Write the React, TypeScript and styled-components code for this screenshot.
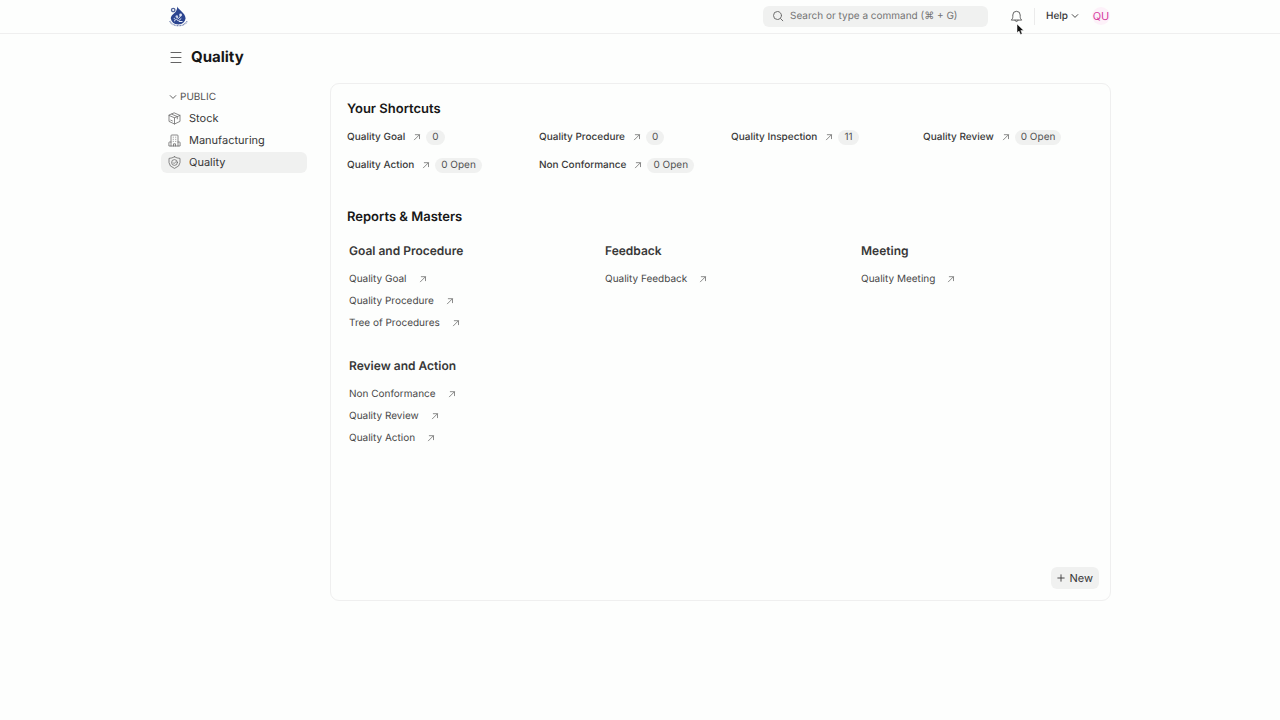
import React from "react";
import styled, { createGlobalStyle } from "styled-components";

const GlobalStyle = createGlobalStyle`
  *, *::before, *::after { box-sizing: border-box; }
  body {
    margin: 0;
    background: #fdfefd;
    color: #383838;
    font-family: Inter, "Liberation Sans", sans-serif;
    font-size: 10px;
    line-height: 16px;
    text-rendering: geometricPrecision;
  }
  h1, h2, h3, ul { margin: 0; padding: 0; }
  ul { list-style: none; }
  a { color: inherit; text-decoration: none; }
  button, input { font: inherit; color: inherit; text-rendering: inherit; }
  svg { display: block; flex: none; }
`;

const Page = styled.div`
  min-height: 100vh;
  overflow: hidden;
`;

const Container = styled.div`
  max-width: 966px;
  margin: 0 auto;
  padding: 0 12px 0 4px;
`;

const Navbar = styled.header`
  border-bottom: 1px solid #efefef;
`;

const NavRow = styled(Container)`
  display: flex;
  align-items: center;
  justify-content: space-between;
  height: 33px;
  padding-bottom: 1px;
`;

const Brand = styled.a`
  display: block;
  padding-left: 8px;
`;

const NavTools = styled.div`
  display: flex;
  align-items: center;
`;

const SearchBox = styled.label`
  display: flex;
  align-items: center;
  gap: 6px;
  width: 225px;
  height: 21px;
  padding: 0 9px;
  border-radius: 6px;
  background: #f0f1f0;
  color: #6e6e6e;
`;

const SearchInput = styled.input`
  flex: 1;
  min-width: 0;
  padding: 0;
  border: 0;
  outline: 0;
  background: transparent;
  &::placeholder { color: #747474; opacity: 1; }
`;

const IconButton = styled.button`
  position: relative;
  display: flex;
  padding: 0;
  border: 0;
  background: none;
  color: #525252;
`;

const BellButton = styled(IconButton)`
  margin-left: 22px;
`;

const Pointer = styled.svg`
  position: absolute;
  left: 6px;
  top: 13px;
`;

const Divider = styled.span`
  width: 1px;
  height: 17px;
  margin: 0 11px;
  background: #ebebeb;
`;

const HelpButton = styled(IconButton)`
  align-items: center;
  gap: 3px;
  color: #383838;
  font-weight: 500;
`;

const Avatar = styled.button`
  width: 18px;
  height: 18px;
  margin: 0 1px 0 13px;
  padding: 0;
  border: 0;
  border-radius: 50%;
  background: #fdf1f9;
  color: #d6409f;
  font-size: 11px;
  line-height: 18px;
`;

const PageHead = styled(Container)`
  display: flex;
  align-items: center;
  height: 49px;
  padding-bottom: 3px;
`;

const MenuButton = styled(IconButton)`
  margin: 0 8px;
`;

const PageTitle = styled.h1`
  color: #171717;
  font-size: 15px;
  font-weight: 700;
  line-height: 20px;
`;

const Body = styled(Container)`
  display: flex;
  align-items: flex-start;
  gap: 23px;
`;

const Sidebar = styled.nav`
  flex: none;
  width: 146px;
  padding-top: 6px;
`;

const SectionToggle = styled(IconButton)`
  align-items: center;
  gap: 3px;
  margin-bottom: 3px;
  padding-left: 8px;
`;

const SideLink = styled.a<{ $active?: boolean }>`
  display: flex;
  align-items: center;
  gap: 8px;
  height: 21px;
  margin-bottom: 1px;
  padding: 0 7px 1px;
  border-radius: 6px;
  background: ${(p) => (p.$active ? "#f0f1f0" : "transparent")};
  font-size: 11px;
  svg { color: #6b6b6b; }
`;

const Panel = styled.main`
  display: flex;
  flex: 1;
  flex-direction: column;
  min-width: 0;
  min-height: 518px;
  padding: 16px 16px 11px;
  border: 1px solid #efefef;
  border-radius: 9px;
`;

const SectionTitle = styled.h2`
  color: #171717;
  font-size: 13px;
  font-weight: 600;
  line-height: 18px;
`;

const ShortcutGrid = styled.ul`
  display: grid;
  grid-template-columns: repeat(4, 1fr);
  gap: 12px 21px;
  margin: 11px 0 35px;
`;

const Shortcut = styled.a`
  display: flex;
  align-items: center;
  gap: 4px;
  height: 16px;
  font-weight: 500;
  white-space: nowrap;
`;

const ShortcutName = styled.span`
  padding-right: 3px;
`;

const Count = styled.span`
  height: 15px;
  padding: 0 6px;
  border-radius: 8px;
  background: #f0f1f0;
  color: #525252;
  font-weight: 400;
  line-height: 15px;
`;

const CardGrid = styled.div`
  display: grid;
  grid-template-columns: repeat(3, 1fr);
  gap: 23px 21px;
  margin-top: 16px;
`;

const Card = styled.section`
  padding-left: 2px;
`;

const CardTitle = styled.h3`
  margin-bottom: 8px;
  font-size: 12px;
  font-weight: 600;
  line-height: 18px;
`;

const CardLink = styled.a`
  display: flex;
  align-items: center;
  gap: 11px;
  height: 22px;
  color: #484848;
`;

const NewButton = styled.button`
  display: flex;
  align-items: center;
  align-self: flex-end;
  gap: 4px;
  height: 22px;
  margin: auto -5px 0 0;
  padding: 0 6px;
  border: 0;
  border-radius: 6px;
  background: #f0f1f0;
  font-size: 11px;
`;

const line = {
  fill: "none",
  stroke: "currentColor",
  strokeLinecap: "round" as const,
  strokeLinejoin: "round" as const,
  "aria-hidden": true,
};

const Arrow = () => (
  <svg width="10" height="10" viewBox="0 0 10 10" {...line} stroke="#6e6e6e" strokeWidth="0.8">
    <path d="M2.4 7.8 7.3 2.9M3.3 2.7h4.2v4" />
  </svg>
);

const Chevron = () => (
  <svg width="8" height="8" viewBox="0 0 8 8" {...line} strokeWidth="0.9">
    <path d="M1.2 2.6 4 5.4l2.8-2.8" />
  </svg>
);

const StockIcon = () => (
  <svg width="13" height="13" viewBox="0 0 13 13" {...line} strokeWidth="0.8">
    <path d="M6.5 1 12 3.4v6L6.5 12 1 9.4v-6zM1 3.4l5.5 2.4L12 3.4M6.5 5.8V12M3.7 2.2l5.6 2.4v2.3M2.8 8.2l1.6.7" />
  </svg>
);

const FactoryIcon = () => (
  <svg width="13" height="13" viewBox="0 0 13 13" {...line} strokeWidth="0.8">
    <path d="M3 12V1.8q0-.8.8-.8h5.4q.8 0 .8.8V12M3 8H1.5q-.6 0-.6.6V12h11.2V8.6q0-.6-.6-.6H10M5.500 12V9.800h2V12" />
    <path d="M5.2 3.2h.1M7.7 3.2h.1M5.2 5.3h.1M7.7 5.3h.1M5.2 7.4h.1M7.7 7.4h.1" />
  </svg>
);

const QualityIcon = () => (
  <svg width="13" height="13" viewBox="0 0 13 13" {...line} strokeWidth="0.8">
    <path d="M6.5.8Q9 2.3 12 2.4v4.2q0 3.8-5.5 5.8Q1 10.4 1 6.6V2.4Q4 2.3 6.5.8z" />
    <circle cx="6.5" cy="6.5" r="2.9" />
    <path d="m5.100 6.600 1 1 1.900-2" />
  </svg>
);

const Logo = () => (
  <svg width="19" height="21" viewBox="0 0 19 21" role="img" aria-label="Home">
    <path d="M8.2.4c1.2 3.4 8.4 6.5 8.4 12.2a7.5 7.5 0 0 1-14.8 0c0-3.4 3.1-4.6 5-7.2C7.9 3.8 8.3 2.3 8.2.4z" fill="#2c4590" />
    <circle cx="4.2" cy="4" r="1.7" fill="none" stroke="#52659c" strokeWidth="1.3" />
    <circle cx="11.6" cy="9" r="1.4" fill="#dfe5f5" />
    <circle cx="7.8" cy="10.5" r="1.3" fill="#c3cee9" />
    <circle cx="5.4" cy="12.6" r="0.8" fill="#aebcdf" />
    <path d="M5 15.3 7.4 13l1.9 2 3-2.6M10 15.5h3.5M7.5 11l2 1.5 2-2.5" fill="none" stroke="#e8edf8" strokeWidth="1" />
    <path d="M1 13.8c.8 7.2 15.6 7.2 16.7.1" fill="none" stroke="#fdfefd" strokeWidth="1.4" />
    <path d="M.8 15c2 6.2 15 6.3 17.3 0" fill="none" stroke="#7685b2" strokeWidth="1.3" strokeDasharray="1 .5" />
  </svg>
);

const shortcuts = [
  ["Quality Goal", "0"],
  ["Quality Procedure", "0"],
  ["Quality Inspection", "11"],
  ["Quality Review", "0 Open"],
  ["Quality Action", "0 Open"],
  ["Non Conformance", "0 Open"],
];

const cards = [
  { title: "Goal and Procedure", links: ["Quality Goal", "Quality Procedure", "Tree of Procedures"] },
  { title: "Feedback", links: ["Quality Feedback"] },
  { title: "Meeting", links: ["Quality Meeting"] },
  { title: "Review and Action", links: ["Non Conformance", "Quality Review", "Quality Action"] },
];

const modules = [
  { name: "Stock", Icon: StockIcon },
  { name: "Manufacturing", Icon: FactoryIcon },
  { name: "Quality", Icon: QualityIcon, active: true },
];

export default function App() {
  return (
    <Page>
      <GlobalStyle />
      <Navbar>
        <NavRow>
          <Brand href="#home"><Logo /></Brand>
          <NavTools>
            <SearchBox>
              <svg width="12" height="12" viewBox="0 0 12 12" {...line}>
                <circle cx="5.5" cy="5.5" r="4" />
                <path d="m8.5 8.5 2.3 2.3" />
              </svg>
              <SearchInput type="text" aria-label="Search" placeholder="Search or type a command (⌘ + G)" />
            </SearchBox>
            <BellButton aria-label="Notifications">
              <svg width="13" height="13" viewBox="0 0 13 13" {...line} strokeWidth="0.9">
                <path d="M1.5 9.8c1-.9 1.3-1.7 1.3-3.3V5a3.7 3.7 0 0 1 7.4 0v1.5c0 1.600.3 2.400 1.300 3.300zM5 10.200c.1 1.900 2.900 1.900 3 0" />
              </svg>
              <Pointer width="9" height="13" viewBox="0 0 9 13" aria-hidden="true">
                <path d="M1 1v8.800l2-1.700 1.500 3.400 1.700-.7L4.800 7.500h2.900z" fill="#111" stroke="#fff" strokeWidth="0.5" />
              </Pointer>
            </BellButton>
            <Divider />
            <HelpButton>Help <Chevron /></HelpButton>
            <Avatar>QU</Avatar>
          </NavTools>
        </NavRow>
      </Navbar>
      <PageHead>
        <MenuButton aria-label="Toggle sidebar">
          <svg width="14" height="14" viewBox="0 0 14 14" {...line} strokeWidth="0.9">
            <path d="M2 2.5h10M2 7.5h10M2 12.5h10" />
          </svg>
        </MenuButton>
        <PageTitle>Quality</PageTitle>
      </PageHead>
      <Body>
        <Sidebar>
          <SectionToggle><Chevron />PUBLIC</SectionToggle>
          {modules.map(({ name, Icon, active }) => (
            <SideLink key={name} href={`#${name}`} $active={active}><Icon />{name}</SideLink>
          ))}
        </Sidebar>
        <Panel>
          <SectionTitle>Your Shortcuts</SectionTitle>
          <ShortcutGrid>
            {shortcuts.map(([name, count]) => (
              <li key={name}>
                <Shortcut href={`#${name}`}>
                  <ShortcutName>{name}</ShortcutName>
                  <Arrow />
                  <Count>{count}</Count>
                </Shortcut>
              </li>
            ))}
          </ShortcutGrid>
          <SectionTitle>Reports &amp; Masters</SectionTitle>
          <CardGrid>
            {cards.map((card) => (
              <Card key={card.title}>
                <CardTitle>{card.title}</CardTitle>
                {card.links.map((name) => (
                  <CardLink key={name} href={`#${name}`}>{name}<Arrow /></CardLink>
                ))}
              </Card>
            ))}
          </CardGrid>
          <NewButton>
            <svg width="8" height="8" viewBox="0 0 8 8" {...line} strokeWidth="0.9"><path d="M4 .8v6.4M.8 4h6.4" /></svg>
            New
          </NewButton>
        </Panel>
      </Body>
    </Page>
  );
}
